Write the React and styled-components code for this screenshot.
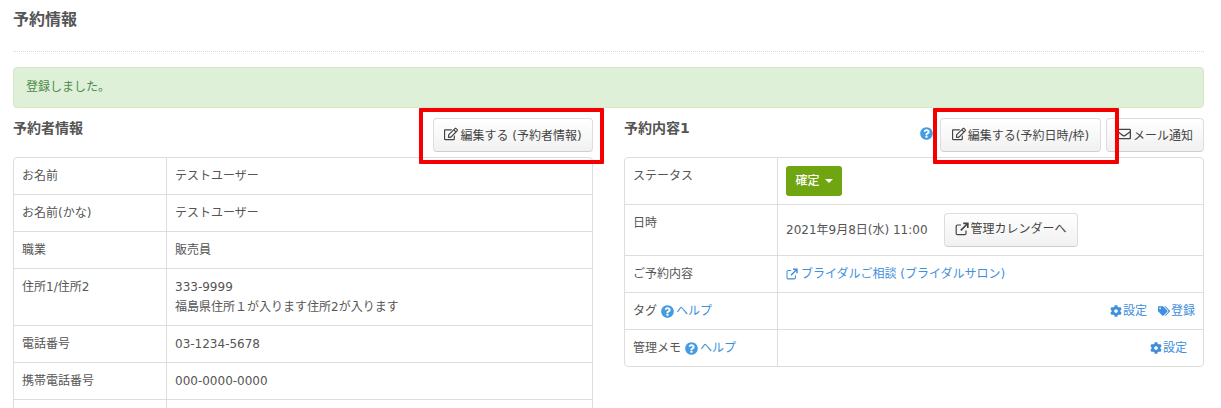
import styled, { createGlobalStyle } from "styled-components";
import {
  FaRegEdit,
  FaRegEnvelope,
  FaQuestionCircle,
  FaCog,
  FaTags,
} from "react-icons/fa";

const GlobalStyle = createGlobalStyle`
  html, body {
    margin: 0;
    height: 408px;
    overflow: hidden;
    background: #fff;
    font-family: "DejaVu Sans", "Noto Sans CJK JP", sans-serif;
    font-size: 12px;
    color: #555;
  }
`;

const Page = styled.div`
  padding: 0 17px 0 13px;
`;

const PageTitle = styled.h1`
  margin: 0;
  padding-top: 9px;
  height: 52px;
  box-sizing: border-box;
  border-bottom: 1px dotted #d8d8d8;
  font-size: 16px;
  line-height: 22px;
  font-weight: 700;
  color: #555;
`;

const Alert = styled.div`
  margin-top: 15px;
  height: 41px;
  box-sizing: border-box;
  padding: 0 12px 4px;
  display: flex;
  align-items: center;
  background: #dff0d8;
  border: 1px solid #d6e9c6;
  border-radius: 4px;
  color: #4d8a4d;
`;

const Columns = styled.div`
  display: grid;
  grid-template-columns: 580px 580px;
  column-gap: 31px;
`;

const SectionHead = styled.div`
  height: 49px;
  display: flex;
  align-items: flex-start;
  justify-content: space-between;
`;

const SectionTitle = styled.h2`
  margin: 10px 0 0;
  font-size: 14px;
  line-height: 20px;
  font-weight: 700;
  color: #555;
`;

const Actions = styled.div`
  display: flex;
  align-items: center;
  gap: 5px;
  margin-top: 10px;
`;

const Button = styled.button`
  height: 34px;
  width: ${(p) => p.$width}px;
  box-sizing: border-box;
  padding: 0 0 2px;
  display: inline-flex;
  align-items: center;
  justify-content: center;
  gap: 2px;
  font: inherit;
  color: #444;
  white-space: nowrap;
  background: linear-gradient(#fff, #f1f1f1);
  border: 1px solid #ddd;
  border-bottom-color: #cfcfcf;
  border-radius: 4px;
  svg {
    font-size: 14px;
    flex: none;
  }
`;

const Annotated = styled.div`
  position: relative;
  display: flex;
  &::after {
    content: "";
    position: absolute;
    top: -10px;
    bottom: -12px;
    left: ${(p) => p.$left}px;
    right: ${(p) => p.$right}px;
    border: 4px solid #f40000;
    border-radius: 1px;
    pointer-events: none;
  }
`;

const Table = styled.div`
  border: 1px solid #ddd;
  border-radius: 4px;
  background: #fff;
`;

const Row = styled.div`
  display: grid;
  grid-template-columns: 153px 1fr;
  min-height: ${(p) => p.$height}px;
  box-sizing: border-box;
  &:not(:last-child) {
    border-bottom: 1px solid #ddd;
  }
`;

const Label = styled.div`
  padding: 8px;
  border-right: 1px solid #ddd;
  line-height: 20px;
  display: flex;
  align-items: flex-start;
  gap: 4px;
`;

const Value = styled.div`
  padding: ${(p) => p.$padding || "8px"};
  line-height: 20px;
  display: flex;
  align-items: ${(p) => (p.$center ? "center" : "flex-start")};
  justify-content: ${(p) => (p.$end ? "flex-end" : "flex-start")};
  gap: ${(p) => p.$gap || 0}px;
`;

const StatusButton = styled.button`
  height: 30px;
  width: 56px;
  padding: 0;
  display: inline-flex;
  align-items: center;
  justify-content: center;
  gap: 5px;
  font: inherit;
  font-weight: 500;
  color: #fff;
  background: #6ea510;
  border: none;
  border-radius: 3px;
`;

const Caret = styled.span`
  width: 0;
  height: 0;
  border-left: 4px solid transparent;
  border-right: 4px solid transparent;
  border-top: 4px solid #fff;
`;

const Link = styled.a`
  color: #3e8fdc;
  display: inline-flex;
  align-items: center;
  gap: ${(p) => p.$gap || 1}px;
  svg {
    flex: none;
  }
`;

const HelpMark = styled(FaQuestionCircle)`
  color: #459ce0;
  font-size: 13px;
  flex: none;
`;

const HeadHelp = styled(HelpMark)`
  margin-right: 2px;
  margin-bottom: 4px;
`;

// thin square with a heavier arrow, the stock icons are too solid here
const ExternalIcon = ({ size = 14 }) => (
  <svg width={size} height={size} viewBox="0 0 14 14" fill="none" stroke="currentColor">
    <path d="M11 8.5v3a1.2 1.2 0 0 1-1.2 1.2H2.4a1.2 1.2 0 0 1-1.2-1.2V4.2A1.2 1.2 0 0 1 2.4 3H6" strokeWidth="1.2" />
    <path d="M5.8 8.4 12.2 2M8.2 1.4h4.6v4.6" strokeWidth="1.7" />
  </svg>
);

const Help = () => (
  <Link $gap={2}>
    <HelpMark />
    ヘルプ
  </Link>
);

const customer = [
  ["お名前", "テストユーザー", 37],
  ["お名前(かな)", "テストユーザー", 37],
  ["職業", "販売員", 37],
  ["住所1/住所2", ["333-9999", "福島県住所１が入ります住所2が入ります"], 57],
  ["電話番号", "03-1234-5678", 37],
  ["携帯電話番号", "000-0000-0000", 37],
  ["", "", 37],
];

const App = () => (
  <>
    <GlobalStyle />
    <Page>
      <PageTitle>予約情報</PageTitle>
      <Alert>登録しました。</Alert>
      <Columns>
        <section>
          <SectionHead>
            <SectionTitle>予約者情報</SectionTitle>
            <Actions>
              <Annotated $left={-14} $right={-11}>
                <Button $width={160}>
                  <FaRegEdit />
                  編集する (予約者情報)
                </Button>
              </Annotated>
            </Actions>
          </SectionHead>
          <Table>
            {customer.map(([label, value, height], i) => (
              <Row key={i} $height={height}>
                <Label>{label}</Label>
                <Value>
                  {Array.isArray(value) ? (
                    <div>
                      {value[0]}
                      <br />
                      {value[1]}
                    </div>
                  ) : (
                    value
                  )}
                </Value>
              </Row>
            ))}
          </Table>
        </section>
        <section>
          <SectionHead>
            <SectionTitle>予約内容1</SectionTitle>
            <Actions>
              <HeadHelp />
              <Annotated $left={-7} $right={-18}>
                <Button $width={161}>
                  <FaRegEdit />
                  編集する(予約日時/枠)
                </Button>
              </Annotated>
              <Button $width={98}>
                <FaRegEnvelope />
                メール通知
              </Button>
            </Actions>
          </SectionHead>
          <Table>
            <Row $height={47}>
              <Label>ステータス</Label>
              <Value>
                <StatusButton>
                  確定
                  <Caret />
                </StatusButton>
              </Value>
            </Row>
            <Row $height={51}>
              <Label>日時</Label>
              <Value $center $gap={16}>
                2021年9月8日(水) 11:00
                <Button $width={134}>
                  <ExternalIcon />
                  管理カレンダーへ
                </Button>
              </Value>
            </Row>
            <Row $height={37}>
              <Label>ご予約内容</Label>
              <Value>
                <Link $gap={3}>
                  <ExternalIcon size={12} />
                  ブライダルご相談 (ブライダルサロン)
                </Link>
              </Value>
            </Row>
            <Row $height={37}>
              <Label>
                タグ
                <Help />
              </Label>
              <Value $end $gap={11}>
                <Link>
                  <FaCog />
                  設定
                </Link>
                <Link>
                  <FaTags />
                  登録
                </Link>
              </Value>
            </Row>
            <Row $height={36}>
              <Label>
                管理メモ
                <Help />
              </Label>
              <Value $end $padding="8px 16px">
                <Link>
                  <FaCog />
                  設定
                </Link>
              </Value>
            </Row>
          </Table>
        </section>
      </Columns>
    </Page>
  </>
);

export default App;
